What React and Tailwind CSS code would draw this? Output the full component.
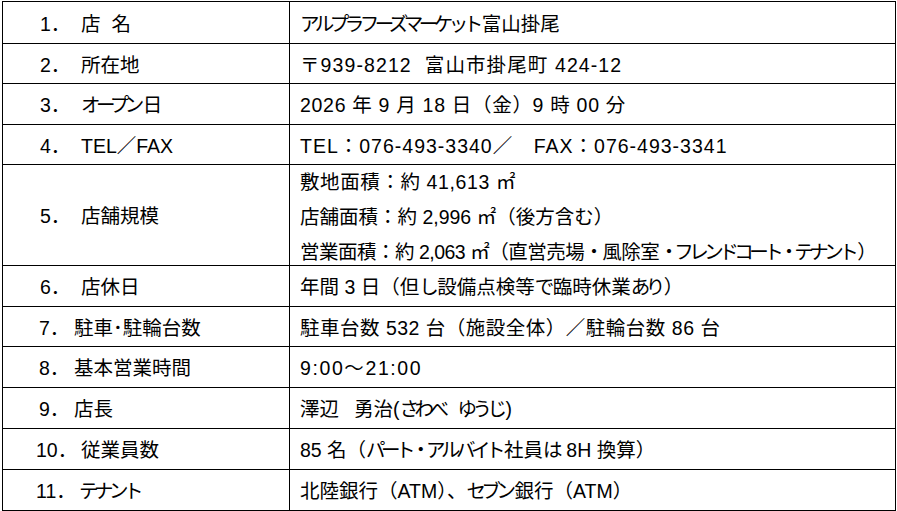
import React from "react";

function K({ t }) {
  const parts = t.split(/([\u3040-\u30ff]+)/);
  return (
    <>
      {parts.map((p, i) =>
        /^[\u3040-\u30ff]+$/.test(p) ? (
          <span key={i} className="tracking-[-4.5px] mr-[3px]">{p}</span>
        ) : (
          <React.Fragment key={i}>{p}</React.Fragment>
        )
      )}
    </>
  );
}

const Sp = ({ w }) => <span className={`inline-block ${w}`}></span>;

const rows = [
  { h: "h-[42px]", num: "1．", numCls: "ml-[3px] w-[41px]", label: (<span>店<Sp w="w-[11px]" />名</span>), vt: "", value: <K t="アルプラフーズマーケット富山掛尾" /> },
  { h: "h-[40px]", num: "2．", numCls: "ml-[3px] w-[41px]", label: "所在地", vt: "tracking-[1.1px]", value: (<span>〒939-8212<Sp w="w-[13px]" />富山市掛尾町 424-12</span>) },
  { h: "h-[41px]", num: "3．", numCls: "ml-[3px] w-[41px]", label: <K t="オープン日" />, vt: "tracking-[0.7px]", value: "2026 年 9 月 18 日（金）9 時 00 分" },
  { h: "h-[40px]", num: "4．", numCls: "ml-[3px] w-[41px]", label: "TEL／FAX", vt: "tracking-[1px]", value: "TEL：076-493-3340／　FAX：076-493-3341" },
  { h: "h-[101px]", num: "5．", numCls: "ml-[3px] w-[41px]", label: "店舗規模", vt: "", value: null },
  { h: "h-[41px]", num: "6．", numCls: "ml-[3px] w-[41px]", label: "店休日", vt: "", value: <K t="年間 3 日（但し設備点検等で臨時休業あり）" /> },
  { h: "h-[40px]", num: "7．", numCls: "ml-[2px] w-[35px]", label: "駐車･駐輪台数", vt: "tracking-[0.5px]", value: "駐車台数 532 台（施設全体）／駐輪台数 86 台" },
  { h: "h-[41px]", num: "8．", numCls: "ml-[2px] w-[35px]", label: "基本営業時間", vt: "tracking-[1.6px]", value: "9:00～21:00" },
  { h: "h-[41px]", num: "9．", numCls: "ml-[2px] w-[35px]", label: "店長", vt: "", value: (<span>澤辺<Sp w="w-[15px]" />勇治(<K t="さわべ" /><Sp w="w-[10px]" /><K t="ゆうじ" />)</span>) },
  { h: "h-[41px]", num: "10．", numCls: "ml-[-1px] w-[45px]", label: "従業員数", vt: "", value: <K t="85 名（パート・アルバイト社員は 8H 換算）" /> },
  { h: "h-[41px]", num: "11．", numCls: "ml-[-1px] w-[43px]", label: <K t="テナント" />, vt: "", value: <K t="北陸銀行（ATM）、セブン銀行（ATM）" /> },
];

export default function App() {
  return (
    <div className="w-[897px] h-[511px] bg-white overflow-hidden">
      <div
        className="ml-[2px] mt-[1px] w-[894px] border-t border-l border-r border-black text-black text-[19.5px] font-['Liberation_Sans','Noto_Sans_CJK_JP',sans-serif]"
      >
        {rows.map((r, i) => (
          <div key={i} className={`flex border-b border-black ${r.h}`}>
            <div className="w-[287px] shrink-0 border-r border-black flex items-center pl-[34px] pt-[4px] whitespace-nowrap">
              <span className={`inline-block ${r.numCls}`}>{r.num}</span>
              <span>{r.label}</span>
            </div>
            <div className="flex-1 flex items-center pl-[10px] pt-[4px] whitespace-nowrap">
              {r.value !== null ? (
                <span className={r.vt}>{r.value}</span>
              ) : (
                <div className="flex flex-col leading-[35px]">
                  <span className="tracking-[0.6px]">敷地面積：約 41,613 ㎡</span>
                  <span>店舗面積：約 2,996 ㎡（後方含む）</span>
                  <span className="tracking-[-0.5px]">営業面積：約 2,063 ㎡（直営売場<K t="・" />風除室<K t="・フレンドコート・テナント" />）</span>
                </div>
              )}
            </div>
          </div>
        ))}
      </div>
    </div>
  );
}
